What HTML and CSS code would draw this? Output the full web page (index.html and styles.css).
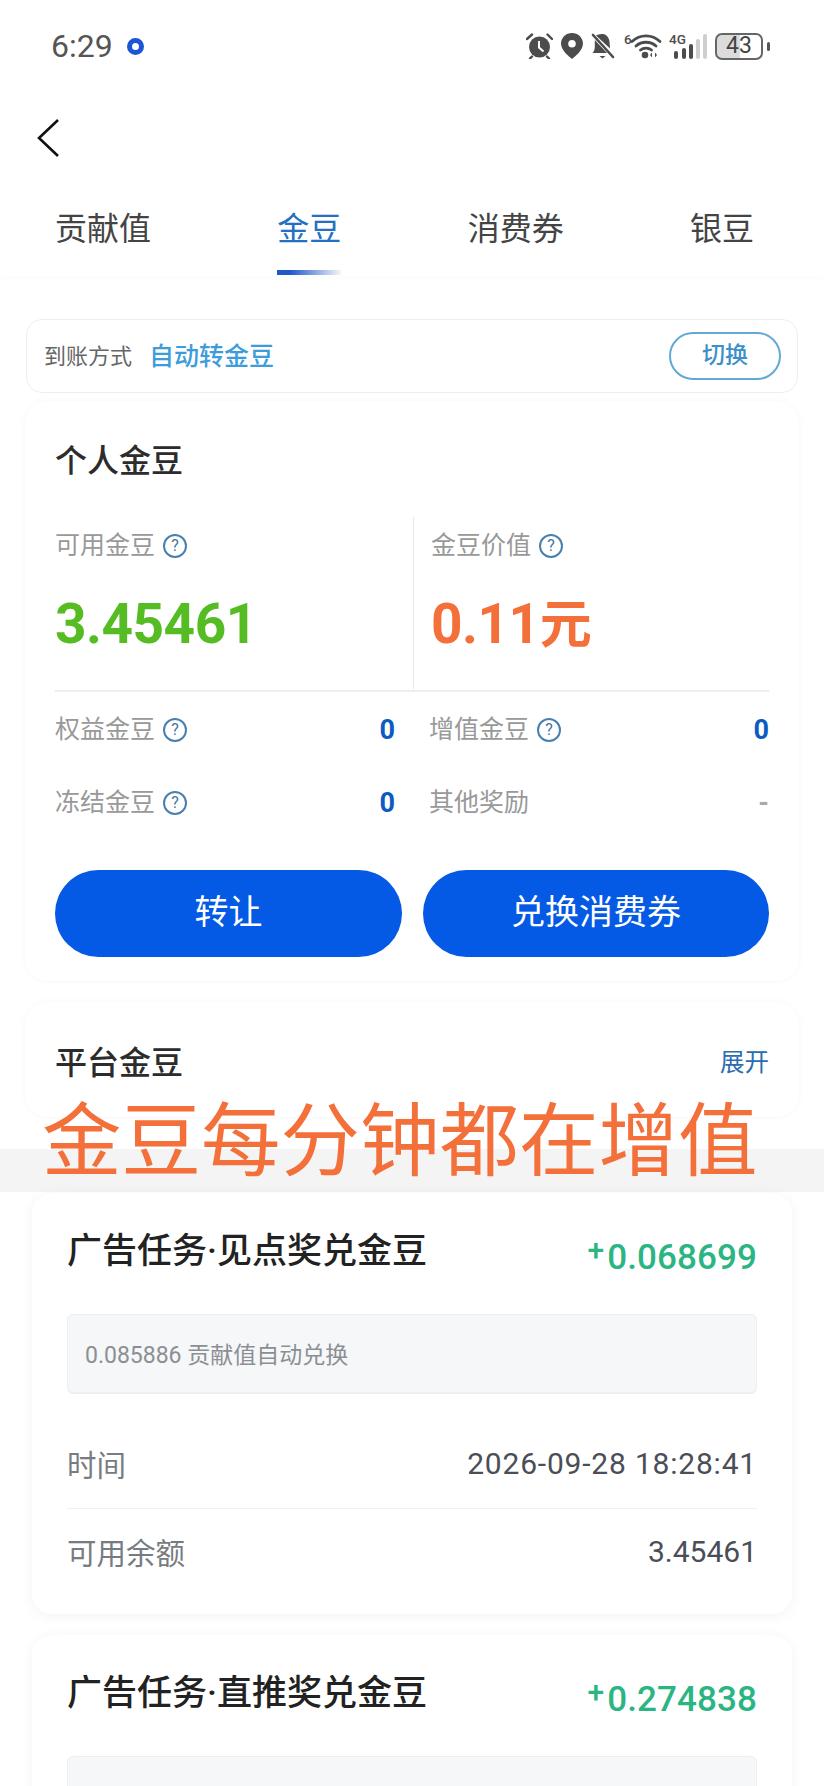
FILE: index.html
```html
<!DOCTYPE html>
<html lang="zh-CN">
<head>
    <meta charset="UTF-8">
    <meta name="viewport" content="width=device-width, initial-scale=1.0">
    <title>金豆</title>
    <link rel="stylesheet" href="styles.css">
</head>
<body>

<div class="page">
    <div class="status">
        <div class="status-left">
            <span class="time">6:29</span>
            <span class="ring"></span>
        </div>
        <div class="status-icons">
            <svg width="27" height="26" viewBox="0 0 27 26" fill="#4c4c4c">
                <circle cx="13.5" cy="14" r="10.5"/>
                <path d="M1 6 6 1.5M26 6 21.5 1.5M6 23.5 4 25.5M21 23.5 23 25.5" stroke="#4c4c4c" stroke-width="2.4" fill="none" stroke-linecap="round"/>
                <path d="M13 8v6.5l4.5 4" stroke="#fff" stroke-width="2" fill="none"/>
            </svg>
            <svg width="22" height="26" viewBox="0 0 22 26" fill="#4c4c4c">
                <path fill-rule="evenodd" d="M11 0C4.9 0 0 4.7 0 10.6 0 17.5 8 23.7 11 26c3-2.3 11-8.5 11-15.4C22 4.7 17.1 0 11 0Zm0 7a3.8 3.8 0 1 1 0 7.6A3.800 3.800 0 0 1 11 7Z"/>
            </svg>
            <svg width="24" height="26" viewBox="0 0 24 26" fill="#4c4c4c">
                <path d="M12 1c4 .5 6 4 6.5 7.5l.5 7L5 2.600C6.800 1.500 9 .7 12 1ZM3.800 7 16 20H1.500c1.500-1.500 2.200-3.500 2.300-6Z"/>
                <path d="M2 2 22 24" stroke="#4c4c4c" stroke-width="2.6" stroke-linecap="round"/>
                <path d="M8.500 23h6l-3 2.500Z"/>
            </svg>
            <svg class="open" width="38" height="26" viewBox="0 0 38 26" fill="none">
                <text x="1" y="11" class="tiny">6</text>
                <path d="M9 8.500C17 1 29 1 37 8.500M13 13c5.500-5 14.500-5 20 0M17.500 17c3-2.600 8-2.600 11 0" stroke="#4c4c4c" stroke-width="2.8" stroke-linecap="round"/>
                <circle cx="22" cy="22" r="3.3" fill="#4c4c4c"/>
                <path d="M29 19.500v5l-2-2.500ZM32 19.500v5l2-2.500Z" fill="#4c4c4c"/>
            </svg>
            <svg class="open" width="38" height="26" viewBox="0 0 38 26" fill="#4c4c4c">
                <text x="0" y="11" class="tiny">4G</text>
                <rect x="5" y="18" width="4" height="8" rx="2"/>
                <rect x="13" y="15" width="4" height="11" rx="2"/>
                <rect x="20" y="11" width="4" height="15" rx="2"/>
                <rect x="27" y="6" width="4" height="20" rx="2" fill="#cfcfcf"/>
                <rect x="34" y="1" width="4" height="25" rx="2" fill="#cfcfcf"/>
            </svg>
            <div class="battery-wrap">
                <div class="battery"><span class="battery-num">43</span></div>
                <span class="battery-nub"></span>
            </div>
        </div>
    </div>

    <div class="nav">
        <svg class="back" width="24" height="40" viewBox="0 0 24 40" fill="none">
            <path d="M22 2 3 20l19 18" stroke="#111" stroke-width="2.6"/>
        </svg>
    </div>

    <div class="tabs">
        <div class="tab">贡献值</div>
        <div class="tab active">金豆</div>
        <div class="tab">消费券</div>
        <div class="tab">银豆</div>
    </div>

    <div class="content">
        <div class="notice">
            <span class="notice-label">到账方式</span>
            <span class="notice-value">自动转金豆</span>
            <span class="notice-btn">切换</span>
        </div>

        <div class="card personal">
            <div class="card-title">个人金豆</div>
            <div class="stats">
                <div class="stat">
                    <div class="label">可用金豆 <span class="help">?</span></div>
                    <div class="big green">3.45461</div>
                </div>
                <div class="stat">
                    <div class="label">金豆价值 <span class="help">?</span></div>
                    <div class="big orange">0.11<span class="unit">元</span></div>
                </div>
            </div>
            <div class="details">
                <div class="detail">
                    <div class="label">权益金豆 <span class="help">?</span></div>
                    <span class="num">0</span>
                </div>
                <div class="detail">
                    <div class="label">增值金豆 <span class="help">?</span></div>
                    <span class="num">0</span>
                </div>
                <div class="detail">
                    <div class="label">冻结金豆 <span class="help">?</span></div>
                    <span class="num">0</span>
                </div>
                <div class="detail">
                    <div class="label">其他奖励</div>
                    <span class="num none">-</span>
                </div>
            </div>
            <div class="actions">
                <div class="btn">转让</div>
                <div class="btn">兑换消费券</div>
            </div>
        </div>

        <div class="card platform">
            <div class="card-title">平台金豆</div>
            <span class="expand">展开</span>
        </div>
    </div>

    <div class="band"></div>

    <div class="records">
        <div class="record">
            <div class="record-head">
                <div class="record-title">广告任务·见点奖兑金豆</div>
                <div class="amount"><span class="plus">+</span>0.068699</div>
            </div>
            <div class="record-box">0.085886 贡献值自动兑换</div>
            <div class="record-row first">
                <span class="row-label">时间</span>
                <span class="row-value date">2026-09-28 18:28:41</span>
            </div>
            <div class="record-row">
                <span class="row-label">可用余额</span>
                <span class="row-value">3.45461</span>
            </div>
        </div>

        <div class="record">
            <div class="record-head">
                <div class="record-title">广告任务·直推奖兑金豆</div>
                <div class="amount"><span class="plus">+</span>0.274838</div>
            </div>
            <div class="record-box"></div>
        </div>
    </div>

    <div class="caption">金豆每分钟都在增值</div>
</div>

</body>
</html>
```

FILE: styles.css
```css
* {
    box-sizing: border-box;
}
html, body {
    margin: 0;
    padding: 0;
    background: #fff;
}
body {
    font-family: Roboto, "Noto Sans CJK SC", sans-serif;
    color: #333;
}
.page {
    position: relative;
    width: 824px;
    height: 1786px;
    overflow: hidden;
}

/* status bar */
.status {
    height: 92px;
    display: flex;
    justify-content: space-between;
    align-items: center;
    padding: 0 54px 0 51px;
}
.status-left {
    display: flex;
    align-items: center;
    gap: 14px;
}
.time {
    font-size: 32px;
    line-height: 36px;
    color: #555;
}
.ring {
    width: 17px;
    height: 17px;
    border-radius: 50%;
    border: 5px solid #1c55d6;
}
.status-icons {
    display: flex;
    align-items: center;
    gap: 8px;
}
.open {
    overflow: visible;
}
.tiny {
    font-family: Roboto, sans-serif;
    font-size: 13.5px;
    font-weight: 500;
    fill: #4c4c4c;
}
.battery-wrap {
    display: flex;
    align-items: center;
    gap: 4px;
}
.battery {
    width: 48px;
    height: 27px;
    border: 2px solid #666;
    border-radius: 7px;
    background: linear-gradient(90deg, #dcdcdc 52%, #fff 52%);
    display: flex;
    align-items: center;
    justify-content: center;
}
.battery-num {
    font-size: 23px;
    line-height: 24px;
    color: #444;
}
.battery-nub {
    width: 3px;
    height: 9px;
    border-radius: 2px;
    background: #555;
}

/* header */
.nav {
    height: 98px;
    padding: 26px 0 0 36px;
}
.back {
    display: block;
}
.tabs {
    height: 86px;
    display: flex;
    justify-content: space-between;
    padding: 0 70px 0 55px;
    box-shadow: 0 3px 6px rgba(0, 0, 0, 0.015);
}
.tab {
    position: relative;
    font-size: 32px;
    line-height: 78px;
    color: #444;
}
.tab.active {
    color: #2470c2;
}
.tab.active::after {
    content: "";
    position: absolute;
    left: 0;
    right: 0;
    bottom: 1px;
    height: 5px;
    background: linear-gradient(90deg, #2058c8, #2058c8 20%, rgba(32, 88, 200, 0.05));
}

/* cards */
.content {
    padding: 43px 25px 0;
}
.notice {
    height: 74px;
    margin: 0 1px;
    display: flex;
    align-items: center;
    padding: 0 16px 0 17px;
    border: 1px solid #eee;
    border-radius: 16px;
}
.notice-label {
    padding-bottom: 5px;
    font-size: 22px;
    color: #666;
}
.notice-value {
    margin-left: 17px;
    padding-bottom: 5px;
    font-size: 25px;
    font-weight: 500;
    color: #3d9ddb;
}
.notice-btn {
    width: 112px;
    height: 48px;
    margin-left: auto;
    border: 2px solid #62a9d3;
    border-radius: 24px;
    font-size: 23px;
    line-height: 44px;
    font-weight: 500;
    text-align: center;
    color: #3d8fc9;
}
.card {
    background: #fff;
    border-radius: 24px;
    padding: 0 30px;
    box-shadow: 0 0 8px rgba(0, 0, 0, 0.035);
}
.personal {
    margin-top: 8px;
    padding-top: 40px;
    padding-bottom: 24px;
}
.card-title {
    font-size: 32px;
    line-height: 40px;
    font-weight: 500;
    color: #2c2c2c;
}
.stats {
    margin-top: 36px;
    height: 175px;
    display: grid;
    grid-template-columns: 358px 1fr;
    border-bottom: 2px solid #eee;
}
.stat {
    padding-top: 13px;
    height: 172px;
}
.stat + .stat {
    border-left: 1px solid #e8e8e8;
    padding-left: 17px;
}
.label {
    display: flex;
    align-items: center;
    gap: 8px;
    font-size: 25px;
    line-height: 32px;
    color: #999;
}
.help {
    width: 24px;
    height: 24px;
    border: 2px solid #4a80ad;
    border-radius: 50%;
    font-size: 16px;
    line-height: 20px;
    text-align: center;
    color: #3f76a5;
}
.big {
    margin-top: 32px;
    font-size: 55px;
    line-height: 60px;
    font-weight: 700;
    letter-spacing: -0.5px;
}
.unit {
    font-size: 52px;
}
.green {
    color: #55bc24;
}
.orange {
    color: #f4703a;
}
.details {
    margin-top: 22px;
    display: grid;
    grid-template-columns: 340px 340px;
    column-gap: 34px;
    row-gap: 41px;
}
.detail {
    display: flex;
    justify-content: space-between;
    align-items: center;
}
.num {
    font-size: 27px;
    line-height: 32px;
    font-weight: 700;
    color: #0b5bc0;
}
.num.none {
    color: #aaa;
}
.actions {
    margin-top: 51px;
    display: grid;
    grid-template-columns: 347px 346px;
    column-gap: 21px;
}
.btn {
    height: 87px;
    border-radius: 44px;
    background: #045ae5;
    font-size: 34px;
    line-height: 85px;
    text-align: center;
    color: #fff;
}
.platform {
    margin-top: 21px;
    height: 115px;
    padding-top: 41px;
    display: flex;
    justify-content: space-between;
}
.expand {
    font-size: 24.5px;
    line-height: 40px;
    color: #2b6cb0;
}

/* stitched lower part */
.band {
    height: 43px;
    margin-top: 32px;
    background: #f4f4f5;
}
.records {
    padding: 1px 32px 0;
}
.record {
    height: 421px;
    margin-bottom: 21px;
    padding: 37px 35px 0;
    border-radius: 20px;
    background: #fff;
    box-shadow: 0 2px 14px rgba(0, 0, 0, 0.05);
}
.record-head {
    height: 44px;
    display: flex;
    justify-content: space-between;
}
.record-title {
    font-size: 35px;
    line-height: 44px;
    font-weight: 500;
    color: #222;
}
.amount {
    font-size: 35px;
    line-height: 56px;
    font-weight: 500;
    letter-spacing: 0.1px;
    color: #2bb583;
}
.plus {
    position: relative;
    top: -9px;
    margin-right: 3px;
    font-size: 30px;
}
.record-box {
    height: 80px;
    margin-top: 40px;
    padding-left: 17px;
    border: 1px solid #eceef1;
    border-bottom-width: 2px;
    border-radius: 6px;
    background: #f6f7f9;
    font-size: 23px;
    line-height: 81px;
    color: #8b8f94;
}
.record-row {
    height: 84px;
    display: flex;
    justify-content: space-between;
    align-items: center;
}
.record-row.first {
    height: 91px;
    margin-top: 24px;
    border-bottom: 1px solid #f0f0f0;
}
.row-label {
    font-size: 29.5px;
    color: #777c82;
}
.row-value {
    font-size: 30px;
    color: #4a4e57;
}
.row-value.date {
    letter-spacing: 0.8px;
}

/* text laid over the picture */
.caption {
    position: absolute;
    left: 42px;
    top: 1102px;
    font-size: 79.5px;
    line-height: 80px;
    white-space: nowrap;
    color: #f4703a;
}
```
